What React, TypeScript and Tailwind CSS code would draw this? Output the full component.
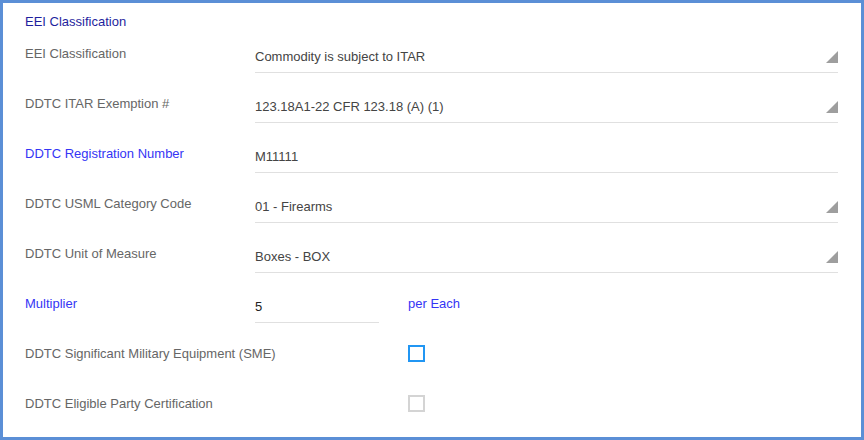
import React from 'react';

type Row = {
  label: string;
  blue?: boolean;
  kind: 'select' | 'text' | 'multiplier' | 'checkbox';
  value?: string;
  checkbox?: 'active' | 'idle';
};

const rows: Row[] = [
  { label: 'EEI Classification', kind: 'select', value: 'Commodity is subject to ITAR' },
  { label: 'DDTC ITAR Exemption #', kind: 'select', value: '123.18A1-22 CFR 123.18 (A) (1)' },
  { label: 'DDTC Registration Number', blue: true, kind: 'text', value: 'M11111' },
  { label: 'DDTC USML Category Code', kind: 'select', value: '01 - Firearms' },
  { label: 'DDTC Unit of Measure', kind: 'select', value: 'Boxes - BOX' },
  { label: 'Multiplier', blue: true, kind: 'multiplier', value: '5' },
  { label: 'DDTC Significant Military Equipment (SME)', kind: 'checkbox', checkbox: 'active' },
  { label: 'DDTC Eligible Party Certification', kind: 'checkbox', checkbox: 'idle' },
];

function Caret() {
  return (
    <svg width="12" height="12" viewBox="0 0 12 12" className="mt-[2px] shrink-0">
      <polygon points="12,0 12,12 0,12" fill="#9e9e9e" />
    </svg>
  );
}

function Field({ row }: { row: Row }) {
  if (row.kind === 'checkbox') {
    const active = row.checkbox === 'active';
    return (
      <div className="pl-[153px] pt-[5px]">
        <div
          className={
            active
              ? 'w-[17px] h-[17px] border-2 border-[#2196f3] bg-white'
              : 'w-[17px] h-[17px] border-2 border-[#d4d4d4] bg-white'
          }
        />
      </div>
    );
  }
  if (row.kind === 'multiplier') {
    return (
      <div className="flex">
        <div className="w-[124px] h-[33px] pt-[9px] border-b border-[#e0e0e0] leading-[16px] text-[#222]">
          {row.value}
        </div>
        <div className="ml-[29px] pt-[6px] leading-[16px] text-[#3535f5]">per Each</div>
      </div>
    );
  }
  return (
    <div className="flex-1 h-[33px] pt-[9px] border-b border-[#e0e0e0] flex justify-between items-start leading-[16px] text-[#444]">
      <span>{row.value}</span>
      {row.kind === 'select' && <Caret />}
    </div>
  );
}

export default function App() {
  return (
    <div
      className="w-[864px] h-[440px] box-border overflow-hidden border-[3px] border-[#5b8fd6] bg-white pl-[22px] pr-[23px] text-[13px]"
      style={{ fontFamily: '"Liberation Sans", Arial, sans-serif' }}
    >
      <div className="pt-[11px] mb-[10px] leading-[16px] text-[#1f1f9e]">EEI Classification</div>
      {rows.map((row) => (
        <div key={row.label} className="flex h-[50px] items-start">
          <div
            className={
              row.blue
                ? 'w-[230px] shrink-0 pt-[6px] leading-[16px] whitespace-nowrap text-[#3535f5]'
                : 'w-[230px] shrink-0 pt-[6px] leading-[16px] whitespace-nowrap text-[#666]'
            }
          >
            {row.label}
          </div>
          <div className={row.kind === 'checkbox' ? 'relative' : 'flex-1 flex'}>
            <Field row={row} />
          </div>
        </div>
      ))}
    </div>
  );
}
